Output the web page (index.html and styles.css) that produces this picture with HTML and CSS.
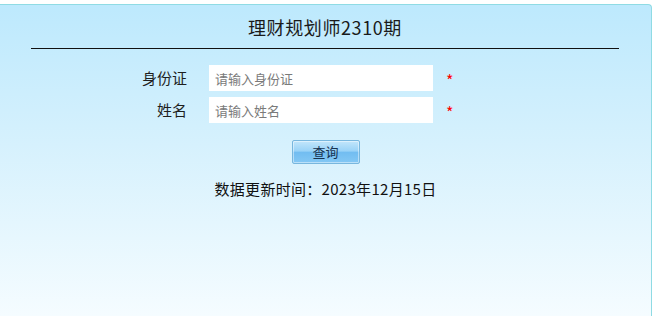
FILE: index.html
```html
<!DOCTYPE html>
<html lang="zh-CN">
<head>
<meta charset="utf-8">
<title>理财规划师2310期</title>
<link rel="stylesheet" href="styles.css">
</head>
<body>
<div class="panel">
  <h1 class="title">理财规划师2310期</h1>
  <form class="form">
    <div class="row">
      <label class="label" for="idcard">身份证</label>
      <input class="input" id="idcard" type="text" placeholder="请输入身份证">
      <span class="star">*</span>
    </div>
    <div class="row">
      <label class="label" for="name">姓名</label>
      <input class="input" id="name" type="text" placeholder="请输入姓名">
      <span class="star">*</span>
    </div>
    <div class="actions">
      <button class="btn" type="button">查询</button>
    </div>
  </form>
  <p class="update">数据更新时间：2023年12月15日</p>
</div>
</body>
</html>
```
FILE: styles.css
```css
html, body {
  margin: 0;
  padding: 0;
  background: #ffffff;
}
body {
  font-family: "Noto Sans CJK SC", "Noto Sans", "Liberation Sans", sans-serif;
  color: #1e1e1e;
  overflow: hidden;
}
.panel {
  margin-top: 4px;
  width: 652px;
  height: 312px;
  box-sizing: border-box;
  border-top: 1px solid #8fdbe4;
  border-right: 1px solid #8fdbe4;
  border-top-right-radius: 4px;
  background: linear-gradient(to bottom, #bde9fd 0%, #d6f1fd 45%, #f5fcff 100%);
}
.title {
  margin: 0 32px 0 31px;
  padding: 11px 0 10px;
  font-size: 18px;
  line-height: 22px;
  letter-spacing: 0.6px;
  font-weight: normal;
  text-align: center;
  color: #1a1a1a;
  border-bottom: 1px solid #111;
}
.form {
  margin: 16px 0 0;
}
.row {
  display: grid;
  grid-template-columns: 187px 224px auto;
  column-gap: 22px;
  align-items: center;
  margin-bottom: 6px;
}
.label {
  text-align: right;
  font-size: 15px;
  line-height: 20px;
  color: #1e1e1e;
}
.input {
  height: 26px;
  box-sizing: border-box;
  border: none;
  outline: none;
  background: #fff;
  padding: 0 6px;
  font-family: inherit;
  font-size: 13px;
  color: #333;
}
.input::placeholder {
  color: #7a7a7a;
}
.star {
  margin-left: -9px;
  color: #ff0000;
  font-size: 16px;
  line-height: 20px;
  padding-top: 4px;
}
.actions {
  display: flex;
  justify-content: center;
  padding-top: 11px;
}
.btn {
  width: 68px;
  height: 24px;
  padding: 0;
  border: 1px solid #78b7de;
  border-radius: 2px;
  background: linear-gradient(to bottom, #c2e6fb 0%, #9ad3f7 45%, #72bdf1 52%, #84c8f4 100%);
  box-shadow: inset 0 0 0 1px rgba(255, 255, 255, 0.45);
  font-family: inherit;
  font-size: 13px;
  line-height: 20px;
  color: #17324f;
}
.update {
  margin: 15px 0 0;
  text-align: center;
  font-size: 15px;
  line-height: 20px;
  letter-spacing: 0.3px;
  color: #111;
}
```
